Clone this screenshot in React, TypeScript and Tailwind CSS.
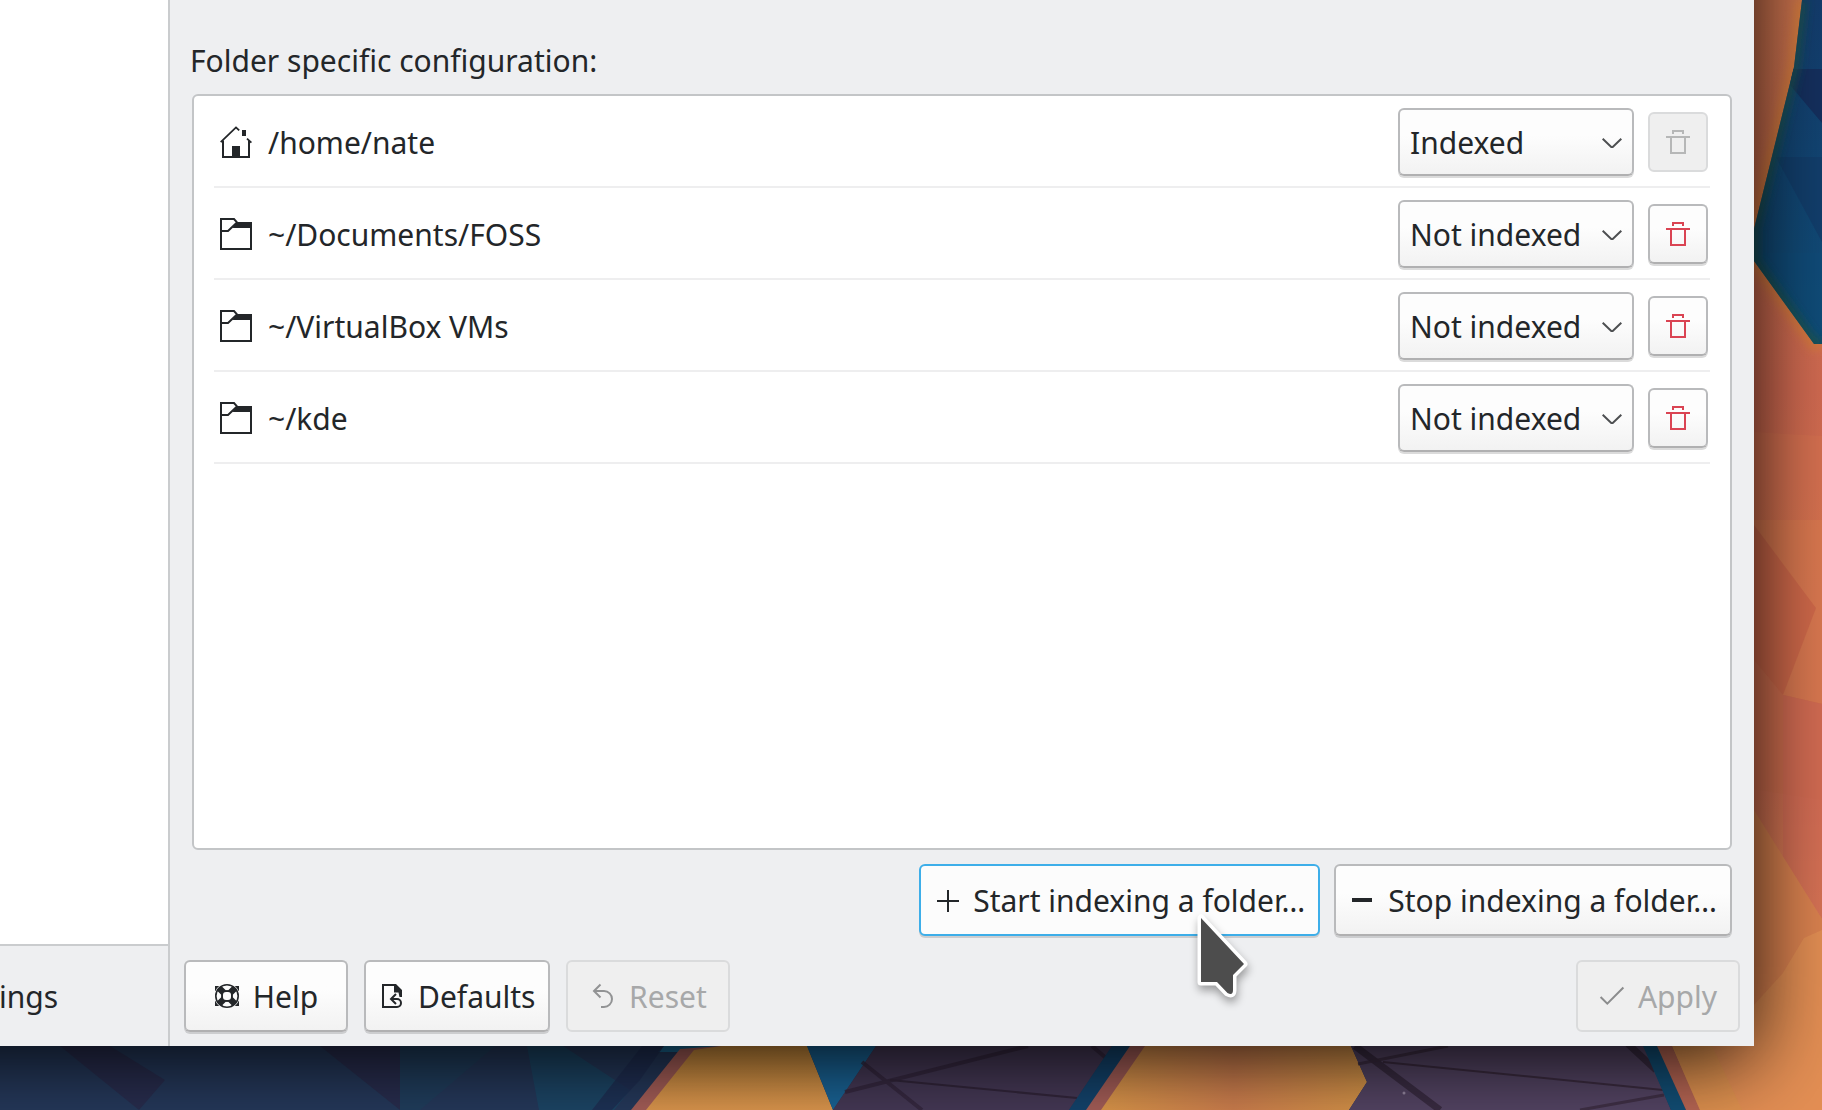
import type { ReactNode, ButtonHTMLAttributes } from "react";

function HomeIcon() {
  return (
    <svg viewBox="0 0 32 32" className="size-8 shrink-0" fill="none" stroke="#232629" strokeWidth="2" aria-hidden="true">
      <path d="M.7 16.2 16 1.4l3.2 3M27 12.6l4.4 4" strokeWidth="1.8" />
      <path d="M3 14.5V31h26V14.5" />
      <path d="M12 20h8v11h-8zM22 4h4v6h-4z" fill="#232629" stroke="none" />
    </svg>
  );
}

function FolderIcon() {
  return (
    <svg viewBox="0 0 32 32" className="size-8 shrink-0" fill="none" stroke="#232629" strokeWidth="2" aria-hidden="true">
      <path d="M31 5v26H1V1h13l3 3.4L8 13H1" strokeWidth="2" />
      <path d="M17 4h15v6H12.5z" fill="#232629" stroke="none" />
    </svg>
  );
}

function TrashIcon() {
  return (
    <svg viewBox="0 0 24 24" className="size-6" fill="none" stroke="currentColor" strokeWidth="2" aria-hidden="true">
      <path d="M7 4V1h10v3M0 7h24M5 7v16h14V7" />
    </svg>
  );
}

function HelpIcon() {
  return (
    <svg viewBox="0 0 32 32" className="size-8 shrink-0" aria-hidden="true">
      <path d="M4 6h5v5H4zM23 6h5v5h-5zM4 21h5v5H4zM23 21h5v5h-5z" fill="#232629" />
      <circle cx="16" cy="16" r="12.6" fill="#fbfbfb" />
      <circle cx="16" cy="16" r="11.2" fill="none" stroke="#232629" strokeWidth="1.6" />
      <path d="m8.2 8.2 15.6 15.6M23.8 8.2 8.2 23.8" stroke="#232629" strokeWidth="6.4" />
      <circle cx="16" cy="16" r="6" fill="#232629" />
      <rect x="12" y="12" width="8" height="8" rx="3" fill="#fbfbfb" />
    </svg>
  );
}

function DefaultsIcon() {
  return (
    <svg viewBox="0 0 32 32" className="size-8 shrink-0" fill="none" stroke="#232629" strokeWidth="2" aria-hidden="true">
      <path d="M19 5H7v22h12" />
      <path d="M18 4h2l6 6v7h-2.500l-1-4.500H18z" fill="#232629" stroke="none" />
      <path d="m20 14-5 5 5 5M15 19h6a4 4 0 0 1 0 8h-3" />
    </svg>
  );
}

function ResetIcon() {
  return (
    <svg viewBox="0 0 32 32" className="size-8 shrink-0" fill="none" stroke="#929394" strokeWidth="2" aria-hidden="true">
      <path d="m13.500 4.500-6.500 6.500 6.500 6.500M7 11h10a8 8 0 0 1 0 16h-3" />
    </svg>
  );
}

function CheckIcon() {
  return (
    <svg viewBox="0 0 32 32" className="size-8 shrink-0" fill="none" stroke="#8b8c8d" strokeWidth="2" aria-hidden="true">
      <path d="m4.600 17 6.700 6.600L27.400 7.500" />
    </svg>
  );
}

function PlusIcon() {
  return (
    <svg viewBox="0 0 32 32" className="size-8 shrink-0" fill="none" stroke="#232629" strokeWidth="2" aria-hidden="true">
      <path d="M6 17h22M17 6v22" />
    </svg>
  );
}

function MinusIcon() {
  return (
    <svg viewBox="0 0 32 32" className="size-8 shrink-0" fill="none" stroke="#232629" strokeWidth="4" aria-hidden="true">
      <path d="M6 16h20" />
    </svg>
  );
}

function Pointer() {
  return (
    <svg
      viewBox="0 0 64 92"
      className="pointer-events-none absolute top-[42px] left-[272px] h-[92px] w-16 overflow-visible drop-shadow-[1px_5px_4px_rgba(0,0,0,0.35)]"
      aria-hidden="true"
    >
      <path
        d="M10 12v64h16l10.500 11q5.500 3 5.500-3V69l11-11z"
        fill="#4d4d4d"
        stroke="#fff"
        strokeWidth="7"
        strokeLinejoin="round"
        paintOrder="stroke"
      />
    </svg>
  );
}

const RAISED =
  "border-[#b9babc] border-b-[#b0b0b1] bg-linear-to-b from-[#fdfdfd] from-40% to-[#f2f2f2] shadow-[0_2px_0_rgba(0,0,0,0.14)]";
const FLAT = "border-[#dadbdc] bg-[#efefef] text-[#a7a8a9]";
const FOCUSED = "border-[#3daee9] bg-[#fcfcfc] shadow-[0_2px_0_rgba(0,0,0,0.14)]";

type PushButtonProps = ButtonHTMLAttributes<HTMLButtonElement> & {
  icon: ReactNode;
  look?: string;
};

function PushButton({ icon, look = RAISED, children, ...rest }: PushButtonProps) {
  return (
    <button
      type="button"
      className={`flex h-[72px] min-w-[164px] items-center justify-center gap-[10px] rounded-md border-2 pr-[13px] pl-[10px] whitespace-nowrap ${look}`}
      {...rest}
    >
      {icon}
      <span className="pt-[2px]">{children}</span>
    </button>
  );
}

type Folder = { path: string; state: string; home?: boolean };

const FOLDERS: Folder[] = [
  { path: "/home/nate", state: "Indexed", home: true },
  { path: "~/Documents/FOSS", state: "Not indexed" },
  { path: "~/VirtualBox VMs", state: "Not indexed" },
  { path: "~/kde", state: "Not indexed" },
];

function FolderRow({ path, state, home }: Folder) {
  return (
    <li className="flex h-[92px] items-center border-b-2 border-[#eeeeef] pt-[2px] pr-[2px] pl-[6px]">
      {home ? <HomeIcon /> : <FolderIcon />}
      <span className="ml-4 flex-1 pt-[2px]">{path}</span>
      <div className="relative mr-[14px] w-[236px]">
        <select
          aria-label={`Indexing of ${path}`}
          defaultValue={state}
          className={`block h-[68px] w-full appearance-none rounded-md border-2 pt-[2px] pl-[10px] ${RAISED}`}
        >
          <option>Indexed</option>
          <option>Not indexed</option>
        </select>
        <svg
          viewBox="0 0 20 12"
          className="pointer-events-none absolute top-7 right-3 h-3 w-5"
          fill="none"
          stroke="#4d4f51"
          strokeWidth="2"
          aria-hidden="true"
        >
          <path d="m.7 2.700 9.300 9 9.300-9" />
        </svg>
      </div>
      <button
        type="button"
        disabled={home}
        aria-label={`Remove ${path}`}
        className={`grid size-[60px] place-items-center rounded-md border-2 ${home ? "border-[#dadbdc] bg-[#efefef] text-[#b6b7b7]" : `text-[#da4453] ${RAISED}`}`}
      >
        <TrashIcon />
      </button>
    </li>
  );
}

const SEA_EDGE = "M1802 0l-8 67-40 162v32l60 83h9";

function Wallpaper() {
  return (
    <svg viewBox="0 0 1822 1110" preserveAspectRatio="xMaxYMax slice" className="absolute inset-0 h-full w-full" aria-hidden="true">
      <defs>
        <linearGradient id="ember" x1="0" y1="0" x2="0" y2="1">
          <stop offset="0" stopColor="#cf7550" />
          <stop offset="0.35" stopColor="#d36b52" />
          <stop offset="0.48" stopColor="#d6704f" />
          <stop offset="0.7" stopColor="#d57053" />
          <stop offset="1" stopColor="#e8975a" />
        </linearGradient>
        <linearGradient id="amber" x1="0" y1="0" x2="0" y2="1">
          <stop offset="0" stopColor="#cf8f3d" />
          <stop offset="1" stopColor="#e39b50" />
        </linearGradient>
        <linearGradient id="amberWide" x1="0" y1="0" x2="1" y2="0">
          <stop offset="0" stopColor="#e29b4c" />
          <stop offset="0.5" stopColor="#d38250" />
          <stop offset="1" stopColor="#dc984a" />
        </linearGradient>
        <linearGradient id="sea" x1="0" y1="0" x2="0" y2="1">
          <stop offset="0" stopColor="#143d6e" />
          <stop offset="1" stopColor="#10507c" />
        </linearGradient>
        <filter id="soft" x="-50%" y="-50%" width="200%" height="200%">
          <feGaussianBlur stdDeviation="5" />
        </filter>
        <clipPath id="seaShape">
          <path d={`${SEA_EDGE}V0z`} />
        </clipPath>
      </defs>
      <rect width="1822" height="1110" fill="#263a5d" />

      <path d="M60 1046h50l55 34-26 30zM320 1046h80v64z" fill="#2b2747" opacity="0.6" />
      <path d="M400 1046h95l-75 64h-20z" fill="#1e4260" opacity="0.6" />
      <path d="M527 1046h36l67 44-16 20h-75z" fill="#1c4b6c" opacity="0.8" />

      <path d="M664 1046h147v6H658z" fill="#1b6a95" />
      <path d="M640 1080l24-34h-22l-50 64h20z" fill="#1f2e54" opacity="0.8" />
      <path d="M680 1049l40-3h80l-60 64H631z" fill="#a9605a" />
      <path d="M694 1050l28-4h85l26 64H646z" fill="url(#amber)" />
      <path d="M807 1046h69l-43 64z" fill="#1a6598" />

      <path d="M876 1046h236l-43 64H833z" fill="#473a58" />
      <path d="M845 1092l183-46M862 1062l60 48M1092 1046l14 12" stroke="#33263c" strokeWidth="4" fill="none" opacity="0.75" />
      <path d="M890 1080l187 18" stroke="#33263c" strokeWidth="2" />
      <path d="M1112 1046h20l-45 64h-18z" fill="#14456f" />
      <path d="M1130 1046h16l-44 64h-16z" fill="#a9605a" />
      <path d="M1145 1046h206l16 36-18 28h-248z" fill="url(#amberWide)" />

      <path d="M1351 1046h293l27 64h-322l18-28z" fill="#564666" />
      <path d="M1355 1046l85 64M1628 1044l28 26" stroke="#35273c" strokeWidth="7" opacity="0.8" />
      <path d="M1358 1064l90-18M1580 1110l84-15" stroke="#3c2c41" strokeWidth="3" opacity="0.8" />
      <path d="M1383 1062l280 28" stroke="#3c2c41" strokeWidth="2" />
      <circle cx="1404" cy="1093" r="1.500" fill="#9a8ba5" />

      <path d="M1643 0h179v1110h-123l-27-64h-29z" fill="url(#ember)" />
      <path d="M1754 432l68 4v84h-68z" fill="#dd7952" opacity="0.35" />
      <path d="M1754 520h68v184l-39-9-29-35z" fill="#df7e52" opacity="0.6" />
      <path d="M1754 525l62 83-33 87-29-35z" fill="#cb6048" opacity="0.6" />
      <path d="M1754 660l29 35 39 9v96l-68-11z" fill="#d37050" opacity="0.7" />
      <path d="M1783 695l39 9v215l-39-62z" fill="#d46856" opacity="0.5" />
      <path d="M1754 810l68 109v191h-123l-27-64h82z" fill="#dc8350" />
      <path d="M1754 1005l29-32 21-35 18-8v180h-123l-27-64z" fill="#e99856" opacity="0.6" />
      <path d="M1643 1046h15l28 64h-15z" fill="#125078" />
      <path d="M1657 1046h15l28 64h-14z" fill="#bb6855" />
      <path d="M1672 1046h40l30 64h-42z" fill="#e0974c" opacity="0.5" />

      <path d={SEA_EDGE} fill="none" stroke="#dd8432" strokeWidth="12" opacity="0.6" filter="url(#soft)" />
      <path d={`${SEA_EDGE}V0z`} fill="url(#sea)" />
      <g clipPath="url(#seaShape)">
        <path d="M1792 69h30v54l-32-38z" fill="#15305f" />
        <path d="M1776 157h46v85z" fill="#133d6b" opacity="0.8" />
        <path d="M1750 253h72v91z" fill="#0f4d7b" opacity="0.7" />
        <path d={SEA_EDGE} fill="none" stroke="#1d5550" strokeWidth="9" filter="url(#soft)" />
      </g>
    </svg>
  );
}

export default function App() {
  return (
    <div className="relative flex min-h-screen overflow-hidden pr-[68px] pb-16 font-['Noto_Sans',sans-serif] text-[30px] leading-10 text-[#232629]">
      <Wallpaper />
      <div className="relative flex flex-1">
        <div className="absolute -top-28 right-0 bottom-0 -left-28 shadow-[0_12px_80px_rgba(0,0,0,0.9)]" />

        <aside className="relative flex w-[170px] shrink-0 flex-col border-r-2 border-[#caccce] bg-white">
          <div className="flex-1" />
          <footer className="flex h-[102px] items-center border-t-2 border-[#caccce] bg-[#eeeff1]">
            <button type="button" className="-ml-px pt-[2px]">ings</button>
          </footer>
        </aside>

        <main className="relative flex min-w-0 flex-1 flex-col bg-[#eeeff1] p-[14px]">
          <section className="flex flex-1 flex-col px-2 pt-[27px]">
            <h2 id="folders-title" className="-ml-[2px]">Folder specific configuration:</h2>
            <ul
              aria-labelledby="folders-title"
              className="mt-[13px] flex-1 rounded-md border-2 border-[#c3c5c7] bg-white px-5"
            >
              {FOLDERS.map((folder) => (
                <FolderRow key={folder.path} {...folder} />
              ))}
            </ul>
            <div className="mt-[14px] flex justify-end gap-[14px]">
              <div className="relative z-10">
                <PushButton icon={<PlusIcon />} look={FOCUSED}>
                  Start indexing a folder…
                </PushButton>
                <Pointer />
              </div>
              <PushButton icon={<MinusIcon />}>Stop indexing a folder…</PushButton>
            </div>
          </section>

          <footer className="mt-6 flex gap-4">
            <PushButton icon={<HelpIcon />}>Help</PushButton>
            <PushButton icon={<DefaultsIcon />}>Defaults</PushButton>
            <PushButton icon={<ResetIcon />} look={FLAT} disabled>
              Reset
            </PushButton>
            <div className="flex-1" />
            <PushButton icon={<CheckIcon />} look={FLAT} disabled>
              Apply
            </PushButton>
          </footer>
        </main>
      </div>
    </div>
  );
}
